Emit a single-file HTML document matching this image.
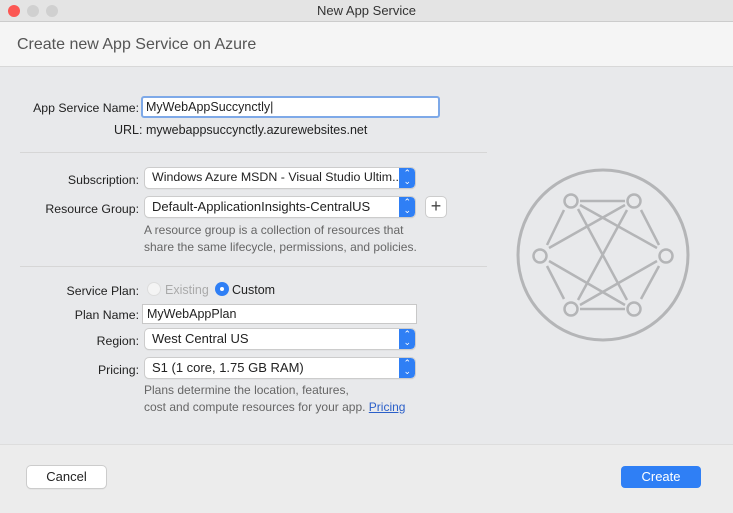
<!DOCTYPE html><html><head><style>
*{margin:0;padding:0;box-sizing:border-box}
body{width:733px;height:513px;overflow:hidden;font-family:"Liberation Sans",sans-serif;font-size:12px;color:#222;background:#e8e9eb;position:relative}
.a{position:absolute}
.tb{left:0;top:0;width:733px;height:22px;background:#e4e4e4;border-bottom:1px solid #ccc;text-align:center;font-size:13px;line-height:22px;color:#333}
.dot{width:12px;height:12px;border-radius:50%;top:5px}
.hd{left:0;top:22px;width:733px;height:45px;background:#f5f5f5;border-bottom:1px solid #d8d8d8;font-size:16px;color:#555;padding:14px 0 0 17px}
.lbl{text-align:right;width:139px;left:0;font-size:12.3px;white-space:nowrap}
.in{background:#fff;border:1px solid #c8c8c8;height:20px;font-size:12.5px;padding:2px 4px;white-space:nowrap}
.sel{background:#fff;height:20px;border-radius:4px;box-shadow:0 0 0 1px #ccc,0 1px 1px #bbb;font-size:13px;padding:2px 7px;white-space:nowrap;overflow:hidden}
.sel::after{content:"";position:absolute;right:0;top:0;width:16px;height:20px;background:#2f7ff5;border-radius:0 4px 4px 0}
.sel span.ar{position:absolute;right:4px;top:1px;color:#fff;font-size:9px;line-height:8px;z-index:2}
.hr{left:20px;width:467px;height:1px;background:#d6d6d6}
.note{font-size:12px;color:#666;line-height:17px;white-space:nowrap}
.btn{height:22px;border-radius:4px;font-size:13px;text-align:center;line-height:22px}
</style></head><body>
<div class="a tb">New App Service</div>
<div class="a dot" style="left:8px;background:#fc5753"></div>
<div class="a dot" style="left:27px;background:#d0d0d0"></div>
<div class="a dot" style="left:46px;background:#d0d0d0"></div>
<div class="a hd">Create new App Service on Azure</div>

<div class="a lbl" style="top:101px">App Service Name:</div>
<div class="a in" style="left:141px;top:96px;width:299px;height:22px;border:2px solid #7ea9e8;border-radius:3px;padding:2px 3px">MyWebAppSuccynctly|</div>
<div class="a" style="left:114px;top:123px;font-size:12.5px">URL: mywebappsuccynctly.azurewebsites.net</div>
<div class="a hr" style="top:152px"></div>

<div class="a lbl" style="top:173px">Subscription:</div>
<div class="a sel" style="left:145px;top:168px;width:270px;font-size:12.4px">Windows Azure MSDN - Visual Studio Ultim...<span class="ar">⌃<br>⌄</span></div>
<div class="a lbl" style="top:202px">Resource Group:</div>
<div class="a sel" style="left:145px;top:197px;width:270px">Default-ApplicationInsights-CentralUS<span class="ar">⌃<br>⌄</span></div>
<div class="a" style="left:426px;top:197px;width:20px;height:20px;background:#fff;border-radius:4px;box-shadow:0 0 0 1px #ccc;text-align:center;font-size:18px;line-height:19px;color:#444">+</div>
<div class="a note" style="left:144px;top:222px">A resource group is a collection of resources that<br>share the same lifecycle, permissions, and policies.</div>
<div class="a hr" style="top:266px"></div>

<div class="a lbl" style="top:284px">Service Plan:</div>
<div class="a" style="left:147px;top:282px;width:14px;height:14px;border-radius:50%;border:1px solid #ddd;background:#f4f4f4"></div>
<div class="a" style="left:165px;top:283px;color:#aaa;font-size:12.5px">Existing</div>
<div class="a" style="left:215px;top:282px;width:14px;height:14px;border-radius:50%;background:#2f7ff5"><div class="a" style="left:5px;top:5px;width:4px;height:4px;border-radius:50%;background:#fff"></div></div>
<div class="a" style="left:232px;top:283px;font-size:12.5px">Custom</div>
<div class="a lbl" style="top:308px">Plan Name:</div>
<div class="a in" style="left:142px;top:304px;width:275px">MyWebAppPlan</div>
<div class="a lbl" style="top:334px">Region:</div>
<div class="a sel" style="left:145px;top:329px;width:270px">West Central US<span class="ar">⌃<br>⌄</span></div>
<div class="a lbl" style="top:363px">Pricing:</div>
<div class="a sel" style="left:145px;top:358px;width:270px">S1 (1 core, 1.75 GB RAM)<span class="ar">⌃<br>⌄</span></div>
<div class="a note" style="left:144px;top:382px">Plans determine the location, features,<br>cost and compute resources for your app. <span style="color:#2a5fc9;text-decoration:underline">Pricing</span></div>

<svg class="a" style="left:510px;top:162px" width="190" height="186" viewBox="510 162 190 186" fill="none" stroke="#b4b5b7" stroke-width="3">
<circle cx="603" cy="255" r="85"/>
<g stroke-width="2.5">
<circle cx="571" cy="201" r="6.5"/><circle cx="634" cy="201" r="6.5"/><circle cx="540" cy="256" r="6.5"/><circle cx="666" cy="256" r="6.5"/><circle cx="571" cy="309" r="6.5"/><circle cx="634" cy="309" r="6.5"/>
<path d="M580 201H625M580 309H625M564 210L547 245M641 210L659 245M547 266L564 299M659 266L641 299M580 205L657 248M625 205L549 248M578 209L627 300M627 210L578 300M549 261L625 305M657 261L580 305"/>
</g></svg>

<div class="a" style="left:0;top:444px;width:733px;height:69px;background:#ececec;border-top:1px solid #ddd"></div>
<div class="a btn" style="left:27px;top:466px;width:79px;background:#fff;box-shadow:0 0 0 1px #ccc,0 1px 1px #bbb">Cancel</div>
<div class="a btn" style="left:621px;top:466px;width:80px;background:#2f7ff5;color:#fff">Create</div>
</body></html>
